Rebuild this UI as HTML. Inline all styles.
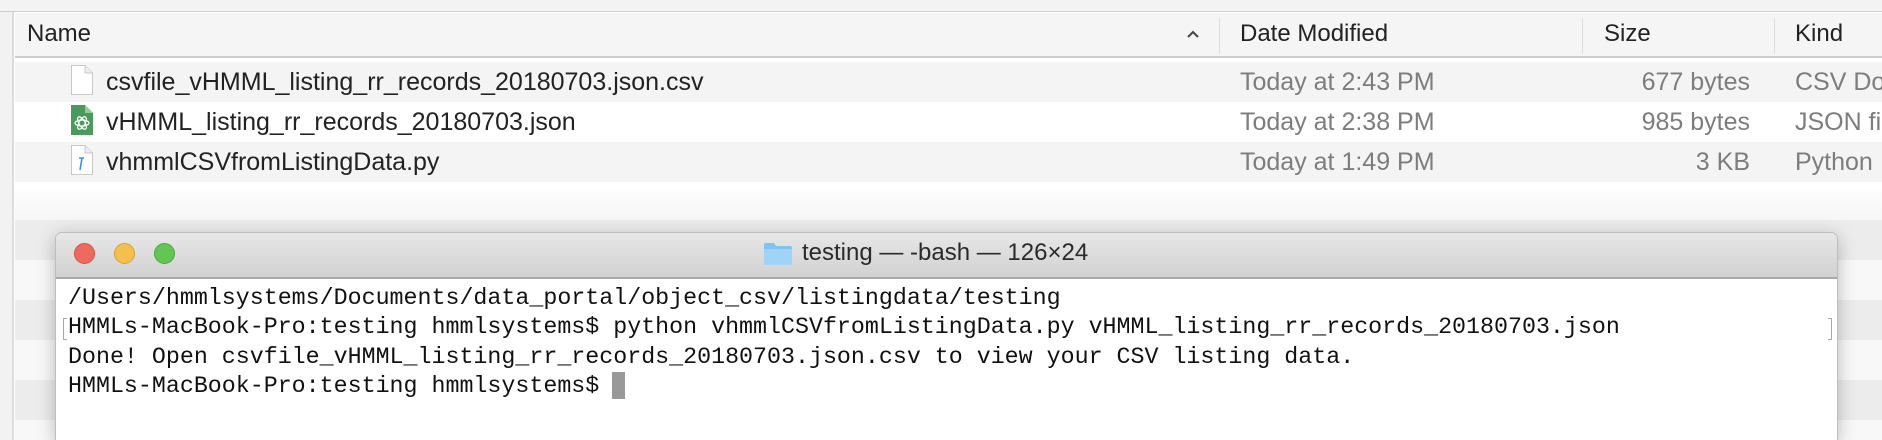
<!DOCTYPE html>
<html style="width:1882px;height:440px;overflow:hidden"><head><meta charset="utf-8"><style>
*{margin:0;padding:0;box-sizing:border-box}
body{width:1882px;height:440px;overflow:hidden;background:#fff;position:relative;font-family:"Liberation Sans",sans-serif}
.a{position:absolute}
.row{position:absolute;left:15px;right:0;height:40px}
.t{position:absolute;font-size:25px;line-height:40px;white-space:nowrap}
.h{font-size:24px}
.mono{font-family:"Liberation Mono",monospace;font-size:23.3px;color:#111;position:absolute;left:68px;white-space:pre;line-height:29.4px}
</style></head><body>
<div class="a" style="left:0;top:0;width:1882px;height:12px;background:#f3f3f3;border-bottom:1px solid #cfcfcf"></div>
<div class="a" style="left:0;top:12px;width:14px;height:428px;background:#f2f2f2;border-right:2px solid #dcdcdc"></div>
<div class="a" style="left:15px;top:13px;right:0;height:45px;background:#f5f5f5;border-bottom:2px solid #cdcdcd"></div>
<div class="t h" style="left:27px;top:14px;color:#222">Name</div>
<svg class="a" style="left:1186px;top:29px" width="14" height="10"><path d="M2 8L7 3L12 8" fill="none" stroke="#444" stroke-width="2"/></svg>
<div class="a" style="left:1219px;top:18px;width:1px;height:36px;background:#ddd"></div>
<div class="a" style="left:1582px;top:18px;width:1px;height:36px;background:#ddd"></div>
<div class="a" style="left:1774px;top:18px;width:1px;height:36px;background:#ddd"></div>
<div class="t h" style="left:1240px;top:14px;color:#222">Date Modified</div>
<div class="t h" style="left:1604px;top:14px;color:#222">Size</div>
<div class="t h" style="left:1795px;top:14px;color:#222">Kind</div>
<div class="row" style="top:62px;background:#f4f4f4"></div>
<div class="row" style="top:102px;background:#fff"></div>
<div class="row" style="top:142px;background:#f4f4f4"></div>
<div class="row" style="top:182px;background:linear-gradient(#fff,#f6f6f6)"></div>
<div class="row" style="top:220px;background:#ececec"></div>
<div class="row" style="top:260px;background:#f8f8f8"></div>
<div class="row" style="top:300px;background:#ececec"></div>
<div class="row" style="top:340px;background:#f8f8f8"></div>
<div class="row" style="top:380px;background:#ececec"></div>
<div class="row" style="top:420px;height:20px;background:#f8f8f8"></div>
<svg class="a" style="left:70px;top:64px" width="24" height="32"><path d="M1.5 1.5H15L22.5 9V30.5H1.5Z" fill="#fff" stroke="#c8c8c8"/><path d="M15 1.5V9H22.5" fill="#eee" stroke="#c8c8c8"/></svg>
<svg class="a" style="left:70px;top:104px" width="24" height="32"><path d="M1 1H15L23 9V31H1Z" fill="#4a9a5c"/><path d="M15 1V9H23" fill="#8fcc96"/><g fill="none" stroke="#fff" stroke-width="1.2"><ellipse cx="12" cy="19" rx="7" ry="3"/><ellipse cx="12" cy="19" rx="7" ry="3" transform="rotate(60 12 19)"/><ellipse cx="12" cy="19" rx="7" ry="3" transform="rotate(-60 12 19)"/></g></svg>
<svg class="a" style="left:70px;top:144px" width="24" height="32"><path d="M1.5 1.5H15L22.5 9V30.5H1.5Z" fill="#fff" stroke="#c8c8c8"/><path d="M15 1.5V9H22.5" fill="#eee" stroke="#c8c8c8"/><path d="M9 14H14M12 14L10 26" stroke="#3a8ee6" stroke-width="1.6" fill="none"/></svg>
<div class="t" style="left:106px;top:62px;color:#222">csvfile_vHMML_listing_rr_records_20180703.json.csv</div>
<div class="t" style="left:106px;top:102px;color:#222">vHMML_listing_rr_records_20180703.json</div>
<div class="t" style="left:106px;top:142px;color:#222">vhmmlCSVfromListingData.py</div>
<div class="t" style="left:1240px;top:62px;color:#7d7d7d">Today at 2:43 PM</div>
<div class="t" style="left:1240px;top:102px;color:#7d7d7d">Today at 2:38 PM</div>
<div class="t" style="left:1240px;top:142px;color:#7d7d7d">Today at 1:49 PM</div>
<div class="t" style="right:132px;top:62px;color:#7d7d7d">677 bytes</div>
<div class="t" style="right:132px;top:102px;color:#7d7d7d">985 bytes</div>
<div class="t" style="right:132px;top:142px;color:#7d7d7d">3 KB</div>
<div class="t" style="left:1795px;top:62px;color:#7d7d7d">CSV Do</div>
<div class="t" style="left:1795px;top:102px;color:#7d7d7d">JSON fil</div>
<div class="t" style="left:1795px;top:142px;color:#7d7d7d">Python</div>
<div class="a" style="left:55px;top:232px;width:1783px;height:208px;background:#fff;border-radius:7px 7px 0 0;border:1px solid #bdbdbd;border-bottom:none;box-shadow:0 4px 18px rgba(0,0,0,.25);overflow:hidden">
<div style="height:46px;background:linear-gradient(#e8e7e8,#d2d1d2);border-bottom:2px solid #a9a9a9"></div>
</div>
<div class="a" style="left:74px;top:243px;width:21px;height:21px;border-radius:50%;background:#ed6a5e;border:1px solid #d15549"></div>
<div class="a" style="left:114px;top:243px;width:21px;height:21px;border-radius:50%;background:#f5bf4f;border:1px solid #d6a13a"></div>
<div class="a" style="left:154px;top:243px;width:21px;height:21px;border-radius:50%;background:#62c655;border:1px solid #4ea843"></div>
<svg class="a" style="left:763px;top:242px" width="30" height="24"><path d="M1 3Q1 1 3 1H11L13 4H27Q29 4 29 6V22Q29 23 28 23H2Q1 23 1 22Z" fill="#7fc3f1"/><path d="M1 7H29V22Q29 23 28 23H2Q1 23 1 22Z" fill="#9fd3f7"/></svg>
<div class="a" style="left:802px;top:238px;font-size:24px;line-height:30px;color:#2a2a2a;white-space:nowrap">testing — -bash — 126×24</div>
<div class="mono" style="top:284px">/Users/hmmlsystems/Documents/data_portal/object_csv/listingdata/testing</div>
<div class="mono" style="top:313.4px">HMMLs-MacBook-Pro:testing hmmlsystems$ python vhmmlCSVfromListingData.py vHMML_listing_rr_records_20180703.json</div>
<div class="mono" style="top:342.8px">Done! Open csvfile_vHMML_listing_rr_records_20180703.json.csv to view your CSV listing data.</div>
<div class="mono" style="top:372.2px">HMMLs-MacBook-Pro:testing hmmlsystems$</div>
<div class="a" style="left:612px;top:372px;width:13px;height:27px;background:#999"></div>
<div class="a" style="left:63px;top:318px;width:4px;height:22px;border:1px solid #aaa;border-right:none"></div>
<div class="a" style="left:1828px;top:318px;width:4px;height:22px;border:1px solid #aaa;border-left:none"></div>
</body></html>
